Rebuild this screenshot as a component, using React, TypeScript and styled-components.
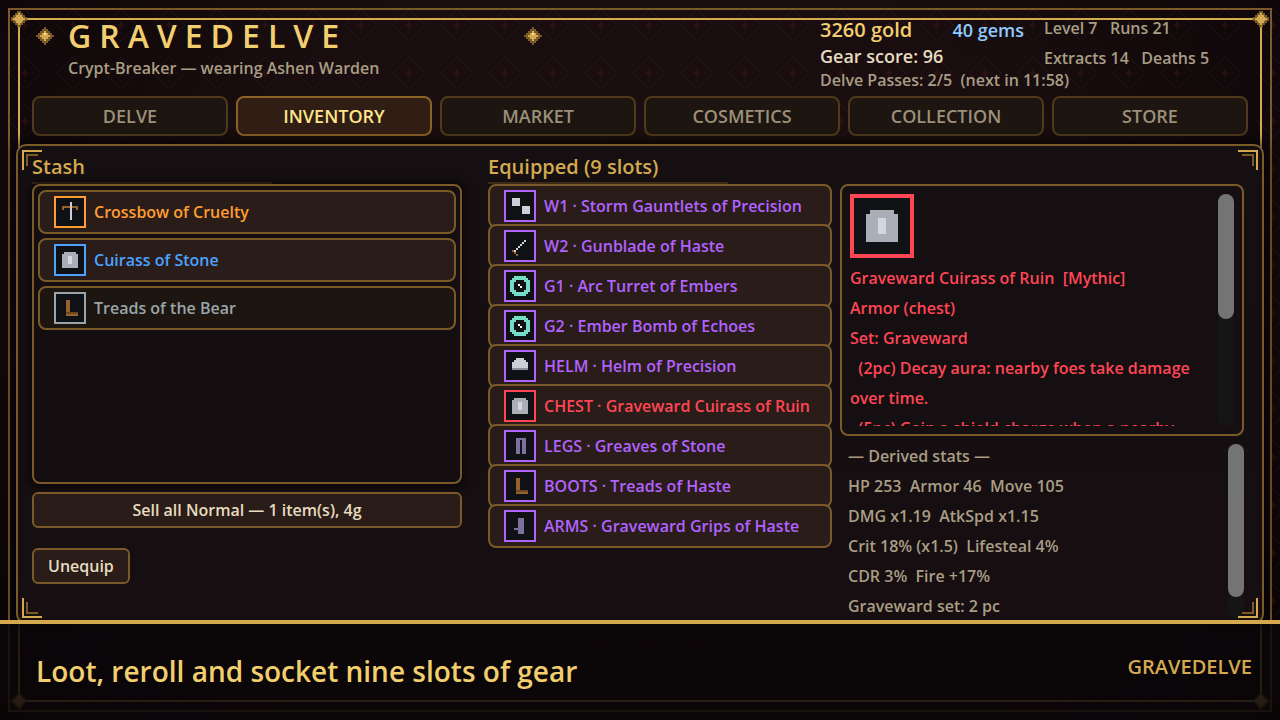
import React from "react";
import styled, { createGlobalStyle } from "styled-components";

const palette = {
  gold: "#d4a94f",
  bright: "#f2cf6e",
  bronze: "#7a5a28",
  muted: "#a99d84",
  cream: "#e6dcc0",
  mythic: "#ff4655",
  epic: "#b163ff",
  legendary: "#ff9d33",
  rare: "#4ba3ff",
  normal: "#9aa5a9",
};

const GlobalStyle = createGlobalStyle`
  *, *::before, *::after { box-sizing: border-box; }
  body {
    margin: 0;
    background: #050304;
    color: ${palette.muted};
    font: 600 16px/24px "Open Sans", "Noto Sans", sans-serif;
  }
  button { font: inherit; cursor: pointer; }
  h1, h2, p, ul { margin: 0; padding: 0; font-weight: inherit; }
  ul { list-style: none; }
`;

const Page = styled.div`
  position: relative;
  isolation: isolate;
  display: flex;
  flex-direction: column;
  min-height: 100vh;
  overflow: hidden;
  background: radial-gradient(ellipse at 50% 35%, #1b0e10 0%, #190d0f 45%, #0d0608 85%, #060304 100%);
`;

const Backdrop = styled.svg`
  position: absolute;
  inset: 0;
  z-index: -1;
  width: 100%;
  height: 100%;
`;

const OuterFrame = styled.div`
  position: absolute;
  inset: 8px;
  z-index: -1;
  border: 2px solid ${palette.bronze};
`;

const InnerFrame = styled.div`
  position: absolute;
  inset: 8px;
  border: 2px solid ${palette.gold};
`;

const Stud = styled.svg<{ $x: "left" | "right"; $y: "top" | "bottom" }>`
  position: absolute;
  ${(p) => p.$x}: -9px;
  ${(p) => p.$y}: -9px;
  width: 16px;
  height: 16px;
`;

const Header = styled.header`
  display: flex;
  justify-content: space-between;
  height: 96px;
  padding: 16px 32px 0 36px;
`;

const Brand = styled.div`
  width: 506px;
`;

const TitleRow = styled.div`
  display: flex;
  align-items: center;
  justify-content: space-between;
  height: 40px;
`;

const Title = styled.h1`
  flex: 1;
  margin-left: 14px;
  color: ${palette.bright};
  font-size: 32px;
  line-height: 40px;
  letter-spacing: 8px;
`;

const Subtitle = styled.p`
  margin-left: 32px;
`;

const Account = styled.div`
  display: flex;
  flex-direction: column;
  width: 428px;
`;

const AccountRows = styled.div`
  display: flex;
  height: 52px;
`;

const Wallet = styled.div`
  display: flex;
  flex-direction: column;
  width: 224px;
`;

const Balance = styled.div`
  display: flex;
  justify-content: space-between;
  align-items: center;
  width: 204px;
  height: 30px;
`;

const Gold = styled.span`
  color: ${palette.bright};
  font-size: 20px;
`;

const Gems = styled.span`
  color: #8fcbff;
  font-size: 18px;
`;

const GearScore = styled.p`
  color: ${palette.cream};
  font-size: 18px;
`;

const Record = styled.p`
  white-space: pre;
  line-height: 30px;
  margin-top: -3px;
`;

const Passes = styled.p`
  white-space: pre;
`;

const Nav = styled.nav`
  display: grid;
  grid-template-columns: repeat(6, 1fr);
  gap: 8px;
  padding: 0 32px;
`;

const Tab = styled.button<{ $active?: boolean }>`
  height: 40px;
  padding: 0;
  border: 2px solid ${(p) => (p.$active ? "#8c6224" : "#4f3b1b")};
  border-radius: 8px;
  background: ${(p) => (p.$active ? "#301d14" : "#1d1510")};
  color: ${(p) => (p.$active ? "#ffe58c" : "#9c907a")};
  font-size: 18px;
`;

const Panel = styled.main`
  position: relative;
  flex: 1;
  display: flex;
  margin: 8px 16px 0;
  padding: 6px 18px 0 14px;
  border: 2px solid ${palette.bronze};
  border-radius: 10px;
  background: linear-gradient(#150f11, #160e10);
  box-shadow: 0 0 10px 4px rgba(0, 0, 0, 0.65);
`;

const Bracket = styled.svg<{ $x: "left" | "right"; $y: "top" | "bottom" }>`
  position: absolute;
  ${(p) => p.$x}: 4px;
  ${(p) => p.$y}: 4px;
  width: 20px;
  height: 20px;
  transform: scale(${(p) => (p.$x === "left" ? 1 : -1)}, ${(p) => (p.$y === "top" ? 1 : -1)});
`;

const Column = styled.section`
  display: flex;
  flex: 430 1 0;
  flex-direction: column;
  min-width: 0;
`;

const EquippedColumn = styled(Column)`
  flex-grow: 344;
  margin-left: 26px;
`;

const DetailColumn = styled(Column)`
  flex-grow: 404;
  margin-left: 8px;
  padding-top: 32px;
`;

const Heading = styled.h2`
  width: 240px;
  height: 32px;
  border-bottom: 2px solid #3d2b18;
  color: ${palette.gold};
  font-size: 20px;
  line-height: 30px;
`;

const StashList = styled.ul`
  display: flex;
  flex-direction: column;
  gap: 4px;
  height: 300px;
  padding: 4px;
  border: 2px solid ${palette.bronze};
  border-radius: 8px;
  background: #140e11;
  box-shadow: 0 0 8px 3px rgba(0, 0, 0, 0.6);
`;

const SlotList = styled.ul`
  display: flex;
  flex-direction: column;
`;

const SlotItem = styled.li`
  & + & { margin-top: -4px; }
`;

const ItemButton = styled.button<{ $color: string; $plain?: boolean }>`
  display: flex;
  align-items: center;
  gap: 8px;
  width: 100%;
  height: 44px;
  padding: 0 14px;
  border: 2px solid ${palette.bronze};
  border-radius: 8px;
  background: ${(p) => (p.$plain ? "#1d1510" : "#2a1c18")};
  color: ${(p) => p.$color};
  text-align: left;
  white-space: nowrap;
`;

const ActionButton = styled.button`
  height: 36px;
  padding: 0 14px;
  border: 2px solid ${palette.bronze};
  border-radius: 6px;
  background: #2a1c18;
  color: ${palette.cream};
`;

const SellButton = styled(ActionButton)`
  margin-top: 8px;
`;

const UnequipButton = styled(ActionButton)`
  align-self: flex-start;
  margin-top: 20px;
`;

const DetailCard = styled.article`
  display: flex;
  justify-content: space-between;
  height: 252px;
  padding: 8px;
  border: 2px solid ${palette.bronze};
  border-radius: 8px;
  background: #150f11;
`;

const DetailBody = styled.div`
  flex: 1;
  overflow: hidden;
  color: ${palette.mythic};
  line-height: 30px;
  white-space: pre-wrap;
`;

const DetailText = styled.div`
  margin-top: 5px;
`;

const Stats = styled.section`
  display: flex;
  justify-content: space-between;
  height: 182px;
  padding: 8px 0 0 8px;
  line-height: 30px;
  white-space: pre;
`;

const StatLines = styled.div`
  margin-top: -3px;
`;

const Track = styled.div`
  flex: none;
  width: 16px;
  border-radius: 8px;
  background: #151516;
`;

const Thumb = styled.div<{ $share: number }>`
  height: ${(p) => p.$share}%;
  border-radius: 8px;
  background: #747474;
`;

const Banner = styled.footer`
  position: relative;
  display: flex;
  align-items: center;
  justify-content: space-between;
  height: 100px;
  margin-top: -4px;
  padding: 0 28px 0 36px;
  border-top: 4px solid ${palette.gold};
  background: rgba(10, 6, 8, 0.86);
`;

const Tagline = styled.p`
  padding-bottom: 2px;
  color: ${palette.bright};
  font-size: 28px;
  line-height: 40px;
`;

const Wordmark = styled.p`
  padding-bottom: 10px;
  color: ${palette.gold};
  font-size: 20px;
`;

type Cell = [x: number, y: number, w: number, h: number, fill: string];

const steel = "#cbcfda";
const leather = "#94612f";
const slate = "#7d709f";
const mint = "#74dcc6";
const boots: Cell[] = [
  [6, 4, 2, 6, leather],
  [6, 10, 6, 1, "#70481f"],
  [6, 11, 6, 1, leather],
];
const charm: Cell[] = [
  [5, 3, 6, 1, mint],
  [4, 4, 8, 1, mint],
  [3, 5, 10, 6, mint],
  [4, 11, 8, 1, mint],
  [5, 12, 6, 1, mint],
  [6, 5, 4, 6, "#101115"],
  [5, 6, 6, 4, "#101115"],
  [7, 7, 1, 1, "#ffffff"],
  [8, 8, 1, 1, "#ffffff"],
];

const sprites: Record<string, Cell[]> = {
  crossbow: [
    [4, 5, 8, 1, leather],
    [4, 6, 1, 1, leather],
    [11, 6, 1, 1, leather],
    [8, 3, 1, 9, steel],
  ],
  chest: [
    [5, 4, 6, 1, "#aaaeb7"],
    [4, 5, 8, 7, "#aaaeb7"],
    [7, 6, 2, 4, "#d4d7e0"],
  ],
  boots,
  gauntlets: [
    [4, 4, 4, 4, steel],
    [9, 8, 4, 4, steel],
  ],
  gunblade: [
    [10, 5, 1, 1, steel],
    [9, 6, 1, 1, steel],
    [8, 7, 1, 1, steel],
    [7, 8, 1, 1, steel],
    [6, 9, 1, 1, steel],
    [5, 10, 1, 1, steel],
    [4, 10, 1, 1, leather],
    [5, 11, 1, 1, leather],
    [6, 12, 1, 1, leather],
  ],
  charm,
  helm: [
    [6, 4, 4, 1, steel],
    [5, 5, 6, 1, steel],
    [4, 6, 8, 3, steel],
    [4, 9, 8, 1, "#8d9098"],
  ],
  legs: [
    [6, 4, 5, 1, slate],
    [6, 5, 2, 7, slate],
    [9, 5, 2, 7, slate],
  ],
  arms: [
    [7, 4, 3, 8, slate],
    [5, 9, 2, 1, slate],
  ],
};

const SpriteArt = styled.svg<{ $size: number }>`
  display: block;
  flex: none;
  width: ${(p) => p.$size}px;
  height: ${(p) => p.$size}px;
`;

function Sprite({ name, color, size = 32 }: { name: string; color: string; size?: number }) {
  return (
    <SpriteArt $size={size} viewBox="0 0 16 16" shapeRendering="crispEdges" aria-hidden="true">
      <rect width="16" height="16" fill={color} />
      <rect x="1" y="1" width="14" height="14" fill="#101115" />
      {sprites[name].map(([x, y, w, h, fill], i) => (
        <rect key={i} x={x} y={y} width={w} height={h} fill={fill} />
      ))}
    </SpriteArt>
  );
}

const GemArt = styled.svg`
  display: block;
  flex: none;
  width: 18px;
  height: 18px;
`;

function Gem() {
  return (
    <GemArt viewBox="0 0 9 9" shapeRendering="crispEdges" aria-hidden="true">
      <path fill="#7a5a28" d="M4 0h1v1h1v1h1v1h1v1h1v1h-1v1h-1v1h-1v1h-1v1h-1v-1h-1v-1h-1v-1h-1v-1h-1v-1h1v-1h1v-1h1v-1h1z" />
      <path fill="#d4a94f" d="M4 2h1v1h1v1h1v1h-1v1h-1v1h-1v-1h-1v-1h-1v-1h1v-1h1z" />
      <path fill="#ffe9a0" d="M4 3h1v1h-1z" />
    </GemArt>
  );
}

function FrameStud({ x, y }: { x: "left" | "right"; y: "top" | "bottom" }) {
  return (
    <Stud $x={x} $y={y} viewBox="0 0 16 16" shapeRendering="crispEdges" aria-hidden="true">
      <path fill="#7a5a28" d="M6 0h4v2h2v2h2v2h2v4h-2v2h-2v2h-2v2h-4v-2h-2v-2h-2v-2h-2v-4h2v-2h2v-2h2z" />
      <path fill="#d4a94f" d="M7 2h2v2h2v2h1v1h2v2h-2v1h-1v2h-2v2h-2v-2h-2v-2h-1v-1h-2v-2h2v-1h1v-2h2z" />
    </Stud>
  );
}

function CornerBracket({ x, y }: { x: "left" | "right"; y: "top" | "bottom" }) {
  return (
    <Bracket $x={x} $y={y} viewBox="0 0 20 20" aria-hidden="true">
      <path fill="#d4a94f" d="M0 0h20v2h-18v18h-2z" />
      <path fill="#7a5a28" d="M4 4h12v2h-10v10h-2z" />
    </Bracket>
  );
}

const tabs = ["DELVE", "INVENTORY", "MARKET", "COSMETICS", "COLLECTION", "STORE"];

const stash = [
  { name: "Crossbow of Cruelty", icon: "crossbow", color: palette.legendary },
  { name: "Cuirass of Stone", icon: "chest", color: palette.rare },
  { name: "Treads of the Bear", icon: "boots", color: palette.normal, plain: true },
];

const slots = [
  { name: "W1 · Storm Gauntlets of Precision", icon: "gauntlets", color: palette.epic },
  { name: "W2 · Gunblade of Haste", icon: "gunblade", color: palette.epic },
  { name: "G1 · Arc Turret of Embers", icon: "charm", color: palette.epic },
  { name: "G2 · Ember Bomb of Echoes", icon: "charm", color: palette.epic },
  { name: "HELM · Helm of Precision", icon: "helm", color: palette.epic },
  { name: "CHEST · Graveward Cuirass of Ruin", icon: "chest", color: palette.mythic },
  { name: "LEGS · Greaves of Stone", icon: "legs", color: palette.epic },
  { name: "BOOTS · Treads of Haste", icon: "boots", color: palette.epic },
  { name: "ARMS · Graveward Grips of Haste", icon: "arms", color: palette.epic },
];

const details = [
  "Graveward Cuirass of Ruin  [Mythic]",
  "Armor (chest)",
  "Set: Graveward",
  "  (2pc) Decay aura: nearby foes take damage over time.",
  "  (5pc) Gain a shield charge when a nearby",
];

const stats = [
  "— Derived stats —",
  "HP 253  Armor 46  Move 105",
  "DMG x1.19  AtkSpd x1.15",
  "Crit 18% (x1.5)  Lifesteal 4%",
  "CDR 3%  Fire +17%",
  "Graveward set: 2 pc",
];

export default function App() {
  return (
    <Page>
      <GlobalStyle />
      <Backdrop aria-hidden="true">
        <defs>
          <pattern id="lattice" width="48" height="48" patternUnits="userSpaceOnUse">
            <path d="M25 9L41 25L25 41L9 25Z" fill="none" stroke="#ffffff" strokeOpacity="0.045" strokeWidth="1" />
            <path d="M24 22h2v2h2v2h-2v2h-2v-2h-2v-2h2z" fill="#7a2a20" fillOpacity="0.2" />
          </pattern>
        </defs>
        <rect width="100%" height="100%" fill="url(#lattice)" />
      </Backdrop>
      <OuterFrame>
        <InnerFrame>
          <FrameStud x="left" y="top" />
          <FrameStud x="right" y="top" />
          <FrameStud x="left" y="bottom" />
          <FrameStud x="right" y="bottom" />
        </InnerFrame>
      </OuterFrame>

      <Header>
        <Brand>
          <TitleRow>
            <Gem />
            <Title>GRAVEDELVE</Title>
            <Gem />
          </TitleRow>
          <Subtitle>Crypt-Breaker — wearing Ashen Warden</Subtitle>
        </Brand>
        <Account>
          <AccountRows>
            <Wallet>
              <Balance>
                <Gold>3260 gold</Gold>
                <Gems>40 gems</Gems>
              </Balance>
              <GearScore>Gear score: 96</GearScore>
            </Wallet>
            <Record>{"Level 7   Runs 21\nExtracts 14   Deaths 5"}</Record>
          </AccountRows>
          <Passes>{"Delve Passes: 2/5  (next in 11:58)"}</Passes>
        </Account>
      </Header>

      <Nav>
        {tabs.map((tab) => (
          <Tab key={tab} type="button" $active={tab === "INVENTORY"}>
            {tab}
          </Tab>
        ))}
      </Nav>

      <Panel>
        <Column>
          <Heading>Stash</Heading>
          <StashList>
            {stash.map((item) => (
              <li key={item.name}>
                <ItemButton type="button" $color={item.color} $plain={item.plain}>
                  <Sprite name={item.icon} color={item.color} />
                  {item.name}
                </ItemButton>
              </li>
            ))}
          </StashList>
          <SellButton type="button">Sell all Normal — 1 item(s), 4g</SellButton>
          <UnequipButton type="button">Unequip</UnequipButton>
        </Column>

        <EquippedColumn>
          <Heading>Equipped (9 slots)</Heading>
          <SlotList>
            {slots.map((item) => (
              <SlotItem key={item.name}>
                <ItemButton type="button" $color={item.color}>
                  <Sprite name={item.icon} color={item.color} />
                  {item.name}
                </ItemButton>
              </SlotItem>
            ))}
          </SlotList>
        </EquippedColumn>

        <DetailColumn>
          <DetailCard>
            <DetailBody>
              <Sprite name="chest" color={palette.mythic} size={64} />
              <DetailText>
                {details.map((line) => (
                  <p key={line}>{line}</p>
                ))}
              </DetailText>
            </DetailBody>
            <Track>
              <Thumb $share={54} />
            </Track>
          </DetailCard>
          <Stats>
            <StatLines>
              {stats.map((line) => (
                <p key={line}>{line}</p>
              ))}
            </StatLines>
            <Track>
              <Thumb $share={88} />
            </Track>
          </Stats>
        </DetailColumn>

        <CornerBracket x="left" y="top" />
        <CornerBracket x="right" y="top" />
        <CornerBracket x="left" y="bottom" />
        <CornerBracket x="right" y="bottom" />
      </Panel>

      <Banner>
        <Tagline>Loot, reroll and socket nine slots of gear</Tagline>
        <Wordmark>GRAVEDELVE</Wordmark>
      </Banner>
    </Page>
  );
}
